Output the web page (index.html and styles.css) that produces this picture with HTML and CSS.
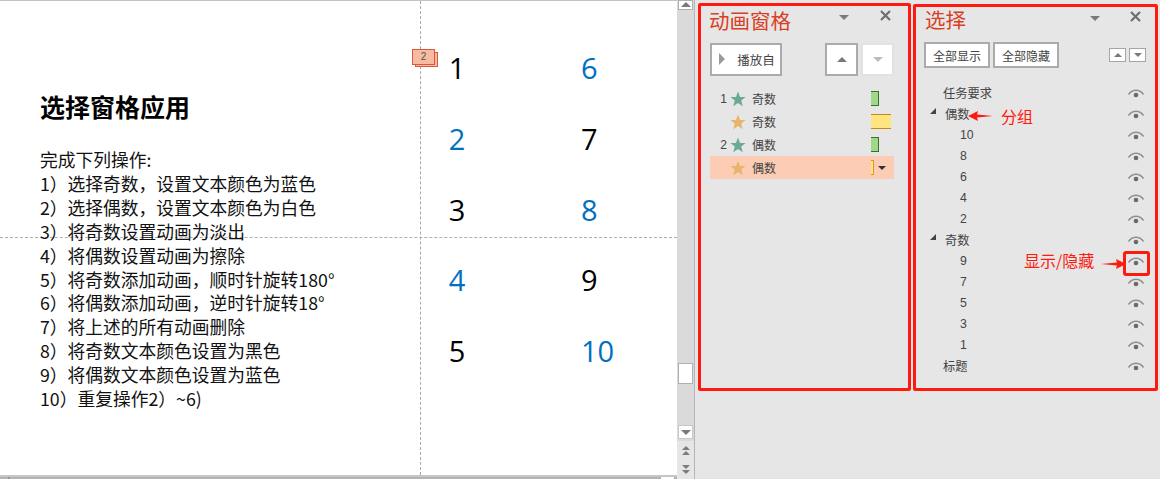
FILE: index.html
```html
<!DOCTYPE html>
<html lang="zh-CN">
<head>
<meta charset="utf-8">
<title>选择窗格应用</title>
<link rel="stylesheet" href="styles.css">
</head>
<body>
<svg class="defs" width="0" height="0" aria-hidden="true">
  <defs>
    <symbol id="eye" viewBox="0 0 16 10">
      <path d="M0.5 6.5C4 1 12 1 15.5 6.5" fill="none" stroke="#7f7f7f" stroke-width="1.3"/>
      <path d="M3 3.6C6 1.4 10 1.4 13 3.6" fill="none" stroke="#a5a5a5" stroke-width="0.8"/>
      <circle cx="8" cy="7" r="2.3" fill="#6a6a6a"/>
    </symbol>
    <symbol id="star" viewBox="0 0 16 16">
      <path d="M8 0.5L10 5.9L15.6 6.1L11.2 9.6L12.7 15.2L8 12L3.3 15.2L4.8 9.6L0.4 6.1L6 5.9Z"/>
    </symbol>
    <symbol id="cross" viewBox="0 0 11 11">
      <path d="M1 1L10 10M10 1L1 10" fill="none" stroke="#6e6e6e" stroke-width="2.2"/>
    </symbol>
  </defs>
</svg>
<div class="app">
  <main class="editor">
    <div class="slide">
      <div class="guide-v"></div>
      <div class="guide-h"></div>
      <div class="tag"><span class="tag-back"></span><span class="tag-front">2</span></div>
      <section class="task">
        <h1>选择窗格应用</h1>
        <p>完成下列操作:</p>
        <p>1）选择奇数，设置文本颜色为蓝色</p>
        <p>2）选择偶数，设置文本颜色为白色</p>
        <p>3）将奇数设置动画为淡出</p>
        <p>4）将偶数设置动画为擦除</p>
        <p>5）将奇数添加动画，顺时针旋转180°</p>
        <p>6）将偶数添加动画，逆时针旋转18°</p>
        <p>7）将上述的所有动画删除</p>
        <p>8）将奇数文本颜色设置为黑色</p>
        <p>9）将偶数文本颜色设置为蓝色</p>
        <p>10）重复操作2）~6)</p>
      </section>
      <div class="numbers">
        <span>1</span><span class="blue">6</span>
        <span class="blue">2</span><span>7</span>
        <span>3</span><span class="blue">8</span>
        <span class="blue">4</span><span>9</span>
        <span>5</span><span class="blue">10</span>
      </div>
    </div>
    <div class="hscroll"><span class="tick"></span><span class="hthumb"></span></div>
  </main>

  <div class="vscroll">
    <span class="sb-btn sb-up"><i class="tri up"></i></span>
    <span class="sb-thumb"></span>
    <span class="sb-btn sb-down"><i class="tri down"></i></span>
    <span class="sb-page"><i class="tri up small"></i><i class="tri up small"></i></span>
    <span class="sb-page"><i class="tri down small"></i><i class="tri down small"></i></span>
  </div>

  <aside class="pane pane-anim">
    <div class="frame">
      <header class="pane-head">
        <h2>动画窗格</h2>
        <i class="tri down head-menu"></i>
        <svg class="close"><use href="#cross"/></svg>
      </header>
      <div class="anim-tools">
        <button class="btn play"><i class="play-tri"></i>播放自</button>
        <button class="btn square"><i class="tri up"></i></button>
        <button class="btn square off"><i class="tri down"></i></button>
      </div>
      <ul class="anim-list">
        <li><span class="num">1</span><svg class="star green"><use href="#star"/></svg><span class="lbl">奇数</span><span class="bar g"></span></li>
        <li><span class="num"></span><svg class="star gold"><use href="#star"/></svg><span class="lbl">奇数</span><span class="bar y"></span></li>
        <li><span class="num">2</span><svg class="star green"><use href="#star"/></svg><span class="lbl">偶数</span><span class="bar g"></span></li>
        <li class="sel"><span class="num"></span><svg class="star gold"><use href="#star"/></svg><span class="lbl">偶数</span><span class="bar ys"></span><i class="tri down dark"></i></li>
      </ul>
    </div>
  </aside>

  <aside class="pane pane-sel">
    <div class="frame">
      <header class="pane-head">
        <h2>选择</h2>
        <i class="tri down head-menu"></i>
        <svg class="close"><use href="#cross"/></svg>
      </header>
      <div class="sel-tools">
        <button class="btn wide">全部显示</button>
        <button class="btn wide">全部隐藏</button>
        <span class="order">
          <button class="btn mini"><i class="tri up"></i></button>
          <button class="btn mini"><i class="tri down"></i></button>
        </span>
      </div>
      <ul class="sel-list">
        <li class="l0"><span>任务要求</span><svg class="eye"><use href="#eye"/></svg></li>
        <li class="grp"><i class="corner"></i><span>偶数</span><svg class="eye"><use href="#eye"/></svg></li>
        <li class="l1"><span>10</span><svg class="eye"><use href="#eye"/></svg></li>
        <li class="l1"><span>8</span><svg class="eye"><use href="#eye"/></svg></li>
        <li class="l1"><span>6</span><svg class="eye"><use href="#eye"/></svg></li>
        <li class="l1"><span>4</span><svg class="eye"><use href="#eye"/></svg></li>
        <li class="l1"><span>2</span><svg class="eye"><use href="#eye"/></svg></li>
        <li class="grp"><i class="corner"></i><span>奇数</span><svg class="eye"><use href="#eye"/></svg></li>
        <li class="l1"><span>9</span><svg class="eye"><use href="#eye"/></svg></li>
        <li class="l1"><span>7</span><svg class="eye"><use href="#eye"/></svg></li>
        <li class="l1"><span>5</span><svg class="eye"><use href="#eye"/></svg></li>
        <li class="l1"><span>3</span><svg class="eye"><use href="#eye"/></svg></li>
        <li class="l1"><span>1</span><svg class="eye"><use href="#eye"/></svg></li>
        <li class="l0"><span>标题</span><svg class="eye"><use href="#eye"/></svg></li>
      </ul>
    </div>
    <span class="note note-group">分组</span>
    <svg class="arrow arrow-group" viewBox="0 0 25 10"><path d="M0 5L10 0L9 3.4L25 5L9 6.6L10 10Z" fill="#ff1a0f"/></svg>
    <span class="note note-eye">显示/隐藏</span>
    <svg class="arrow arrow-eye" viewBox="0 0 25 10"><path d="M25 5L15 0L16 3.4L0 5L16 6.6L15 10Z" fill="#ff1a0f"/></svg>
    <span class="eye-box"></span>
  </aside>
</div>
</body>
</html>
```
FILE: styles.css
```css
* { box-sizing: border-box; }
html, body { margin: 0; height: 100%; overflow: hidden; }
body { font-family: "Noto Sans CJK SC", "Liberation Sans", sans-serif; background: #e6e6e6; color: #444; }
.defs { position: absolute; }
ul { list-style: none; margin: 0; padding: 0; }
h1, h2, p { margin: 0; font-weight: normal; }
button { font: inherit; color: inherit; padding: 0; }

.app { display: flex; width: 1160px; height: 479px; }

/* Editor */
.editor { width: 677px; height: 479px; display: flex; flex-direction: column; background: #fff; }
.slide { position: relative; flex: 1; border-top: 1px solid #c4c4c4; overflow: hidden; }
.guide-v { position: absolute; left: 420px; top: 0; bottom: 0; border-left: 1px dashed #a8a8a8; }
.guide-h { position: absolute; left: 0; right: 0; top: 236px; border-top: 1px dashed #b0b0b0; }

.tag { position: absolute; left: 412px; top: 48px; width: 26px; height: 20px; }
.tag-back, .tag-front { position: absolute; border: 1px solid #e0563a; background: #f6bba0; }
.tag-back { left: 3px; top: 3px; width: 23px; height: 15px; }
.tag-front { left: 0; top: 0; width: 23px; height: 16px; font: 10px/14px "Liberation Sans", sans-serif; color: #555; text-align: center; }

.task { position: absolute; left: 40px; top: 90px; width: 340px; color: #111; }
.task h1 { font-size: 25px; line-height: 30px; font-weight: 700; color: #000; margin-bottom: 27px; white-space: nowrap; }
.task p { font-size: 17.75px; line-height: 23.9px; white-space: nowrap; }

.numbers { position: absolute; left: 417px; top: 49px; display: grid; grid-template-columns: 80px 80px; column-gap: 84px; grid-auto-rows: 70.75px; font: 29px/36px "Open Sans", "Liberation Sans", sans-serif; color: #000; }
.numbers span { text-align: center; }
.numbers span:nth-child(even) { text-align: left; }
.numbers .blue { color: #0070c0; }

.hscroll { position: relative; height: 4px; background: #d4d4d4; border-top: 2px solid #c6c6c6; border-bottom: 2px solid #b4b4b4; }
.tick { position: absolute; left: 8px; top: 0; width: 2px; height: 2px; background: #999; }
.hthumb { position: absolute; left: 660px; top: 0; width: 15px; height: 2px; background: #fff; border-left: 1px solid #aaa; border-right: 1px solid #aaa; }

/* Vertical scrollbar */
.vscroll { position: relative; width: 18px; height: 479px; background: #dadada; border-right: 1px solid #b5b5b5; display: flex; flex-direction: column; align-items: center; }
.sb-btn, .sb-thumb { display: flex; align-items: center; justify-content: center; width: 15px; background: #fff; border: 1px solid #b0b0b0; }
.sb-up { height: 10px; margin-bottom: 353px; }
.sb-thumb { height: 21px; margin-bottom: 41px; }
.sb-down { height: 15px; margin-bottom: 2px; border-color: #c8c8c8; }
.sb-page { height: 19px; display: flex; flex-direction: column; align-items: center; justify-content: center; gap: 1px; background: #e6e6e6; width: 100%; }

/* Triangles */
.tri { display: block; width: 0; height: 0; border-left: 5px solid transparent; border-right: 5px solid transparent; }
.tri.up { border-bottom: 5px solid #7a7a7a; }
.tri.down { border-top: 5px solid #7a7a7a; }
.tri.small { border-left-width: 4px; border-right-width: 4px; }
.tri.small.up { border-bottom-width: 4px; }
.tri.small.down { border-top-width: 4px; }
.tri.dark { border-left-width: 4px; border-right-width: 4px; border-top: 4px solid #333; }

/* Panes */
.pane { position: relative; height: 479px; background: #e6e6e6; }
.pane-anim { width: 218px; padding: 3px 2px 0 3px; }
.pane-sel { width: 247px; padding: 4px 2px 0 0; }
.frame { position: relative; height: 388px; border: 3px solid #ff1a0f; border-radius: 2px; }
.pane-sel .frame { height: 387px; }

.pane-head { position: absolute; left: 0; right: 0; top: 0; height: 30px; }
.pane-head h2 { position: absolute; left: 8px; top: 0; font-size: 20.5px; line-height: 28px; color: #d9401f; white-space: nowrap; }
.head-menu { position: absolute; top: 9px; }
.close { position: absolute; top: 4px; width: 11px; height: 11px; }
.pane-anim .head-menu { left: 138px; }
.pane-anim .close { left: 179px; }
.pane-sel .head-menu { left: 174px; }
.pane-sel .close { left: 214px; }
.pane-sel .pane-head h2 { left: 9px; top: -2px; }

.btn { display: inline-flex; align-items: center; justify-content: center; background: #fff; border: 2px solid #ababab; font-size: 12px; color: #444; }

/* Animation pane */
.anim-tools { position: absolute; left: 9px; top: 37px; width: 184px; display: flex; }
.play { width: 72px; height: 33px; margin-right: 43px; padding-left: 20px; position: relative; font-size: 12.5px; }
.play-tri { position: absolute; left: 7px; top: 8px; width: 0; height: 0; border-left: 6px solid #9a9a9a; border-top: 6px solid transparent; border-bottom: 6px solid transparent; }
.square { width: 33px; height: 33px; }
.square.off { margin-left: 3px; border-color: #e2e2e2; }
.square.off .tri { border-top-color: #bdbdbd; }

.anim-list { position: absolute; left: 9px; top: 81px; width: 184px; }
.anim-list li { position: relative; display: flex; align-items: center; height: 23px; font-size: 12px; }
.anim-list .num { width: 17px; text-align: right; font-family: "Liberation Sans", sans-serif; }
.star { width: 16px; height: 16px; margin-left: 3px; }
.star.green { fill: #6aa898; }
.star.gold { fill: #e8b46c; }
.anim-list .lbl { margin-left: 6px; }
.bar { position: absolute; left: 161px; }
.bar.g { top: 4px; width: 8px; height: 15px; background: #a0d88a; border: 1px solid #3e6f24; border-left: 0; }
.bar.y { top: 4px; width: 20px; height: 15px; background: #ffe57f; border-top: 1px solid #c8891c; border-bottom: 1px solid #c8891c; }
.bar.ys { top: 4px; width: 3px; height: 15px; background: #ffe57f; border: 1px solid #d9962a; border-width: 1px 1px 1px 0; }
.sel { background: #fccdb4; }
.sel .tri.dark { position: absolute; left: 168px; top: 10px; }

/* Selection pane */
.sel-tools { position: absolute; left: 8px; top: 35px; right: 9px; display: flex; align-items: flex-start; }
.wide { width: 66px; height: 26px; margin-right: 3px; }
.order { display: flex; gap: 3px; margin-left: auto; margin-top: 6px; }
.mini { width: 17px; height: 14px; border-width: 1px; border-color: #a5a5a5; }
.mini .tri { border-left-width: 4px; border-right-width: 4px; }
.mini .tri.up { border-bottom-width: 4px; }
.mini .tri.down { border-top-width: 4px; }

.sel-list { position: absolute; left: 0; right: 0; top: 76px; }
.sel-list li { position: relative; display: flex; align-items: center; height: 21px; font-size: 12.25px; line-height: 21px; }
.l0 { padding-left: 27px; }
.grp { padding-left: 29px; }
.l1 { padding-left: 44px; font-family: "Liberation Sans", sans-serif; }
.corner { position: absolute; left: 14px; top: 4px; width: 0; height: 0; border-bottom: 6px solid #444; border-left: 6px solid transparent; }
.eye { position: absolute; left: 212px; top: 5px; width: 16px; height: 10px; }

.note { position: absolute; color: #ff1a0f; white-space: nowrap; line-height: 20px; font-size: 16px; }
.note-group { left: 88px; top: 106px; }
.note-eye { left: 111px; top: 250px; }
.arrow { position: absolute; width: 25px; height: 10px; }
.arrow-group { left: 55px; top: 111px; }
.arrow-eye { left: 188px; top: 259px; }
.eye-box { position: absolute; left: 210px; top: 251px; width: 27px; height: 25px; border: 3px solid #ff1a0f; border-radius: 3px; }
```
